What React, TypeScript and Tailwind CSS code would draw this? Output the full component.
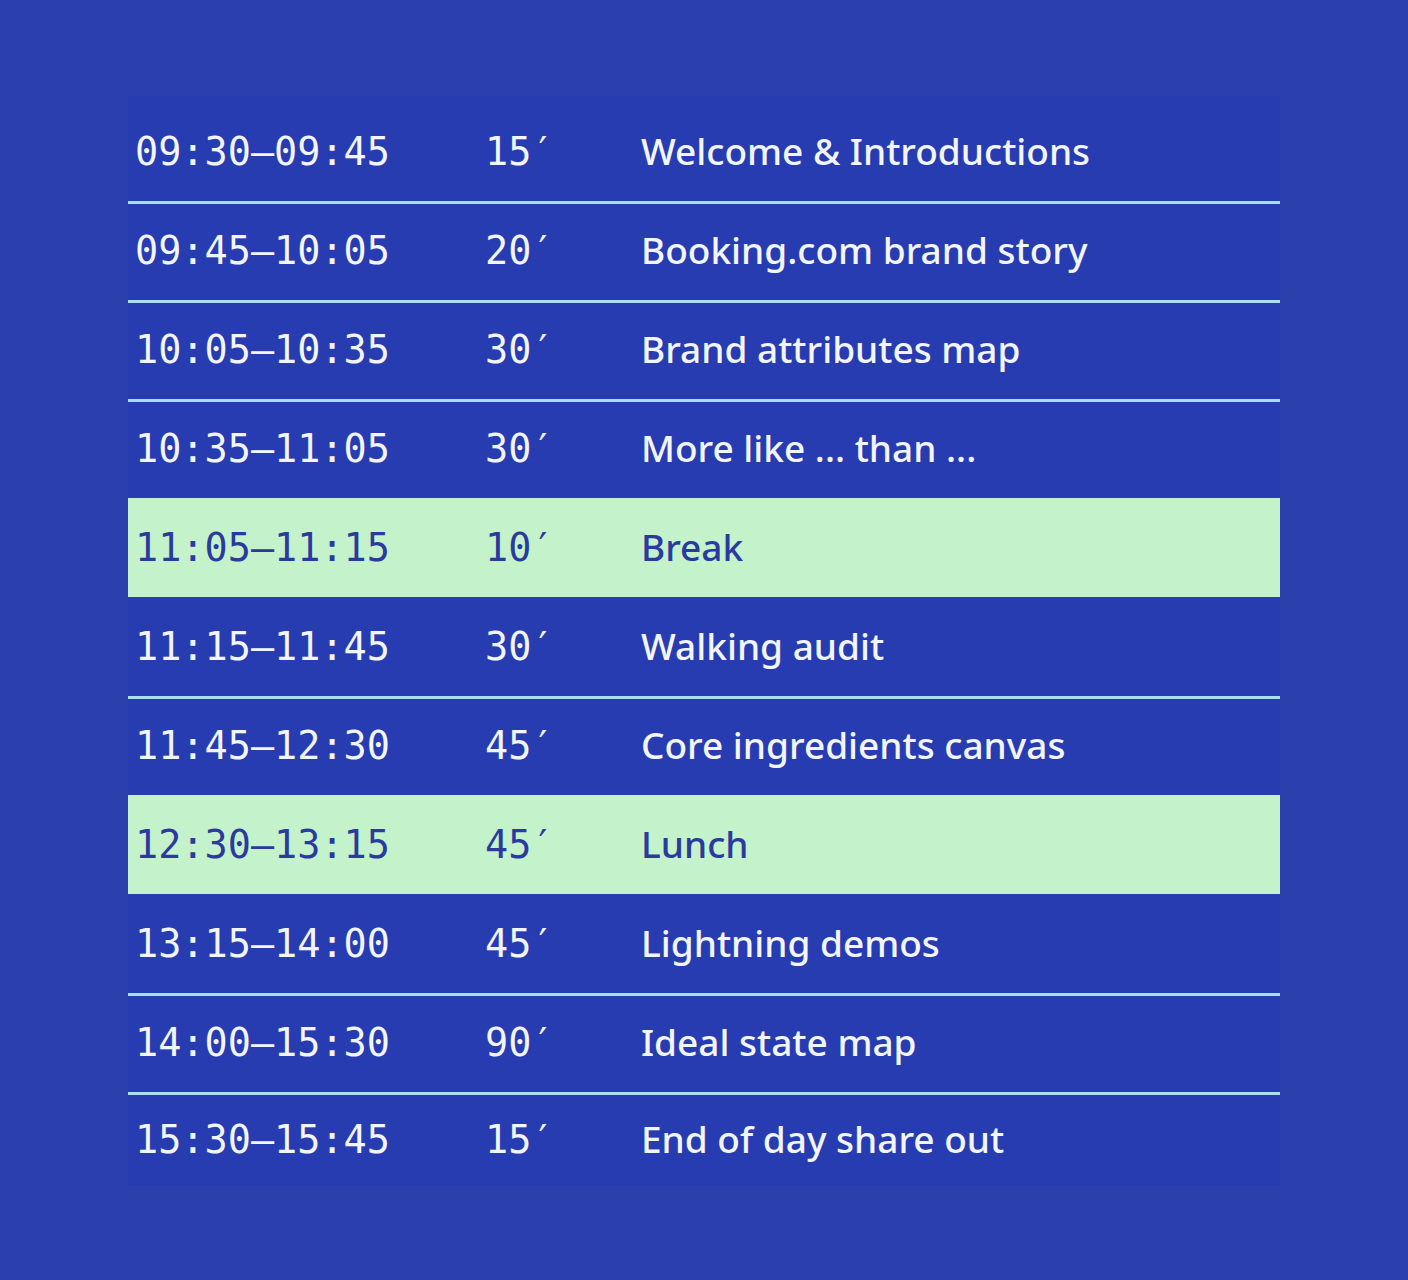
const sessions = [
  { time: "09:30–09:45", mins: "15", title: "Welcome & Introductions" },
  { time: "09:45–10:05", mins: "20", title: "Booking.com brand story" },
  { time: "10:05–10:35", mins: "30", title: "Brand attributes map" },
  { time: "10:35–11:05", mins: "30", title: "More like ... than ..." },
  { time: "11:05–11:15", mins: "10", title: "Break", pause: true },
  { time: "11:15–11:45", mins: "30", title: "Walking audit" },
  { time: "11:45–12:30", mins: "45", title: "Core ingredients canvas" },
  { time: "12:30–13:15", mins: "45", title: "Lunch", pause: true },
  { time: "13:15–14:00", mins: "45", title: "Lightning demos" },
  { time: "14:00–15:30", mins: "90", title: "Ideal state map" },
  { time: "15:30–15:45", mins: "15", title: "End of day share out" },
];

const mono = { fontFamily: "'DejaVu Sans Mono', 'Liberation Mono', monospace" };

export default function App() {
  return (
    <div className="min-h-screen w-full bg-[#2b3fad] px-[128px] py-[96px]">
      <div className="bg-[#283cb2] pt-[6px]">
        {sessions.map((s, i) => {
          const prev = sessions[i - 1];
          // divider only between two regular rows
          const showLine = i > 0 && !s.pause && !prev?.pause;
          const last = i === sessions.length - 1;
          return (
            <div
              key={s.time}
              className={`flex items-center border-t-[3px] pb-[2px] pl-[7px] ${last ? "h-[94px]" : "h-[99px]"} ${
                s.pause ? "bg-[#c3f2cb] text-[#2b3a9e]" : "text-[#f3f5fc]"
              } ${showLine ? "border-[#a8dcf4]" : "border-transparent"}`}
            >
              <div className="flex items-baseline">
                <span className="w-[350px] text-[38.5px] leading-none" style={mono}>
                  {s.time}
                </span>
                <span className="w-[156px] text-[38.5px] leading-none" style={mono}>
                  {s.mins}′
                </span>
                <span
                  className="text-[37px] font-medium leading-none"
                  style={{ fontFamily: "'Noto Sans', Inter, sans-serif" }}
                >
                  {s.title}
                </span>
              </div>
            </div>
          );
        })}
      </div>
    </div>
  );
}
